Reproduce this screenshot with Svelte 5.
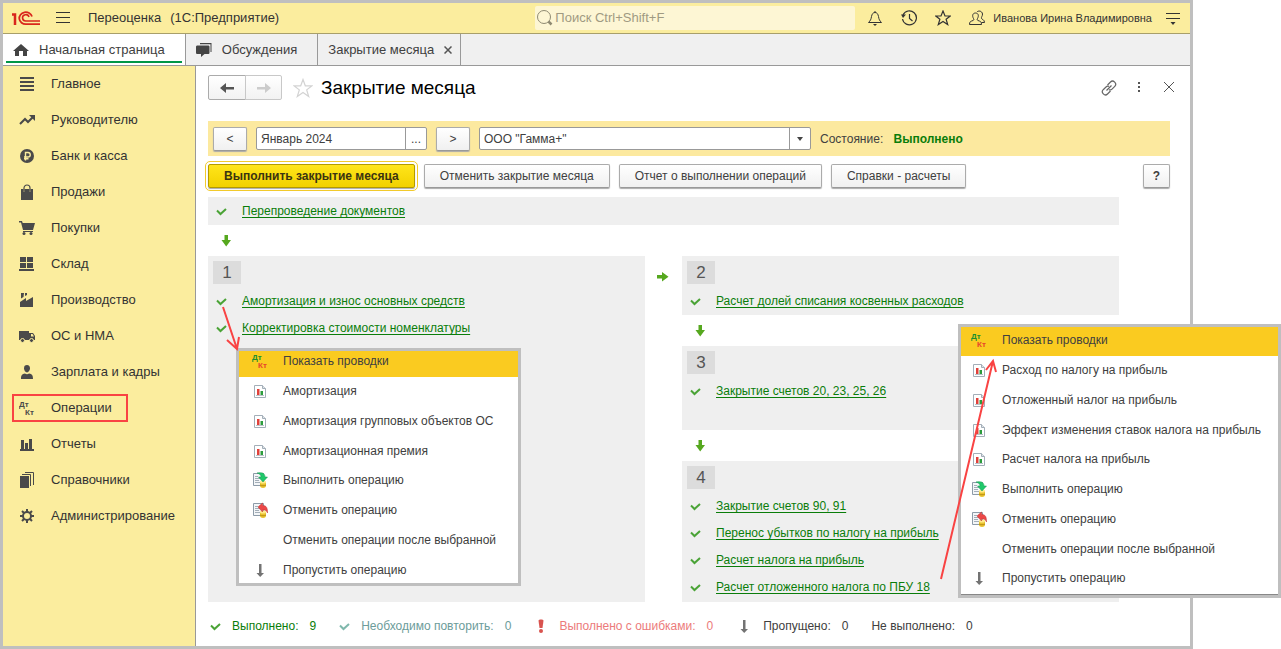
<script>
  const sections = [
    { icon: 'lines', title: 'Главное' },
    { icon: 'trend', title: 'Руководителю' },
    { icon: 'ruble', title: 'Банк и касса' },
    { icon: 'bag', title: 'Продажи' },
    { icon: 'cart', title: 'Покупки' },
    { icon: 'stock', title: 'Склад' },
    { icon: 'factory', title: 'Производство' },
    { icon: 'truck', title: 'ОС и НМА' },
    { icon: 'person', title: 'Зарплата и кадры' },
    { icon: 'dtkt', title: 'Операции' },
    { icon: 'bars', title: 'Отчеты' },
    { icon: 'books', title: 'Справочники' },
    { icon: 'gear', title: 'Администрирование' }
  ]
  let current = 'Операции'

  const steps = {
    1: ['Амортизация и износ основных средств', 'Корректировка стоимости номенклатуры'],
    2: ['Расчет долей списания косвенных расходов'],
    3: ['Закрытие счетов 20, 23, 25, 26'],
    4: ['Закрытие счетов 90, 91', 'Перенос убытков по налогу на прибыль', 'Расчет налога на прибыль', 'Расчет отложенного налога по ПБУ 18']
  }

  const common = [
    { icon: 'run', title: 'Выполнить операцию' },
    { icon: 'undo', title: 'Отменить операцию' },
    { icon: '', title: 'Отменить операции после выбранной' },
    { icon: 'skip', title: 'Пропустить операцию' }
  ]
  const assetsMenu = [
    { icon: 'dtktColor', title: 'Показать проводки' },
    { icon: 'report', title: 'Амортизация' },
    { icon: 'report', title: 'Амортизация групповых объектов ОС' },
    { icon: 'report', title: 'Амортизационная премия' },
    ...common
  ]
  const taxMenu = [
    { icon: 'dtktColor', title: 'Показать проводки' },
    { icon: 'report', title: 'Расход по налогу на прибыль' },
    { icon: 'report', title: 'Отложенный налог на прибыль' },
    { icon: 'report', title: 'Эффект изменения ставок налога на прибыль' },
    { icon: 'report', title: 'Расчет налога на прибыль' },
    ...common
  ]

  let search = ''
  let month = 'Январь 2024'
  let company = 'ООО "Гамма+"'
</script>

{#snippet icon(name)}
  <svg class="icon" width="16" height="16" viewBox="0 0 16 16" fill="currentColor" aria-hidden="true">
    {#if name === 'lines'}
      <path d="M1 1h14v2H1zM1 5h14v2H1zM1 9h14v2H1zM1 13h14v2H1z" />
    {:else if name === 'trend'}
      <path d="M1 12l5-5 3 3 5-5" fill="none" stroke="currentColor" stroke-width="2" />
      <path d="M10 3h6v6z" />
    {:else if name === 'ruble'}
      <circle cx="8" cy="8" r="7" />
      <path d="M6.500 12.500V4.500H9a2.200 2.200 0 0 1 0 4.500H5M5 10.800h4.500" fill="none" stroke="#fbed9e" stroke-width="1.400" />
    {:else if name === 'bag'}
      <path d="M2 5h2.500v2.500h1V5h5v2.500h1V5H14v11H2z" />
      <path d="M5 7V4a3 3 0 0 1 6 0v3" fill="none" stroke="currentColor" stroke-width="1.200" />
    {:else if name === 'cart'}
      <path d="M0 1h3l.7 2H16l-2 7H4L2 2.500H0z" />
      <path d="M4 11.500h10" stroke="currentColor" />
      <circle cx="5" cy="13.500" r="1.500" /><circle cx="12" cy="13.500" r="1.500" />
    {:else if name === 'stock'}
      <path d="M1 1h6v5H1zM8 1h6v5H8zM1 7h6v5H1zM8 7h6v5H8zM0 13h15v2H0z" />
    {:else if name === 'factory'}
      <path d="M1 15V10l6-4v3l7-4v10z" />
      <path d="M2 1h3l-.5 4L2 6.500zM6 1h2v2L6 4z" />
    {:else if name === 'truck'}
      <path d="M0 3h10v9H0z" />
      <path d="M10 5h4l2 3v4h-6zm2 1v2.500h3L13.500 6z" fill-rule="evenodd" />
      <circle cx="3.500" cy="12.500" r="2" stroke="#fbed9e" /><circle cx="12.500" cy="12.500" r="2" stroke="#fbed9e" />
    {:else if name === 'person'}
      <path d="M8 1c2 0 3 1.300 3 3.300S9.500 8.500 8 8.500 5 6.500 5 4.300 6 1 8 1z" />
      <path d="M2 15c0-4 1-5 4-5.500 1 1 3 1 4 0 3 .5 4 1.500 4 5.500z" />
    {:else if name === 'dtkt' || name === 'dtktColor'}
      <text x="0" y="7" class="glyph" class:green={name === 'dtktColor'}>Дт</text>
      <text x="6" y="15" class="glyph" class:red={name === 'dtktColor'}>Кт</text>
    {:else if name === 'bars'}
      <path d="M2 4h3v10H2zM6 7h3v7H6zM10 3h3v11h-3zM1 13h14v2H1z" />
    {:else if name === 'books'}
      <path d="M1 4h9v12H1z" />
      <path d="M3 2.500h8.500V14M6 .5h8.500V13" fill="none" stroke="currentColor" />
    {:else if name === 'gear'}
      <circle cx="8" cy="8" r="4" fill="none" stroke="currentColor" stroke-width="2" />
      <path d="M8 1v3M8 12v3M1 8h3M12 8h3M3 3l2 2M11 11l2 2M3 13l2-2M11 5l2-2" stroke="currentColor" stroke-width="2" />
    {:else if name === 'report'}
      <path d="M2.500 2.500h8l3 3v9h-11z" fill="#fff" stroke="#a3aeb8" />
      <path d="M10.500 2.500v3h3" fill="#dde3e8" stroke="#a3aeb8" />
      <path d="M5 6h2.500v6H5z" fill="#e0403a" /><path d="M8.500 8H11v4H8.500z" fill="#2c9c3c" />
      <path d="M4 12.500h8" stroke="#b9c2ca" />
    {:else if name === 'run' || name === 'undo'}
      <path d="M1.500 1.500h10v12h-10z" fill="#f4f6f8" stroke="#8d9ba8" />
      <path d="M3 4.500h3M3 6.500h5M3 8.500h4M3 10.500h5" stroke="#a3aeb8" />
      <path d="M8 10v4c0 2.500 6 2.500 6 0v-4z" fill="#e9c22e" />
      <ellipse cx="11" cy="10" rx="3" ry="1.500" fill="#ffe98a" />
      <path d="M8 13c1 1 5 1 6 0" fill="none" stroke="#b98e14" />
      {#if name === 'run'}
        <path d="M5 1c5-1 8 0 8 4h2.500L11 10 6.500 5H9c0-2-1-3-4-4z" fill="#1fc86a" stroke="#159650" stroke-width=".5" />
      {:else}
        <path d="M6 5l4.500-4v2.500c4 0 5 2 5 7.500-1-2.500-2-3-5-3V10z" fill="#ec4848" stroke="#b62e2e" stroke-width=".5" />
      {/if}
    {:else if name === 'skip'}
      <path d="M7 2h2.500v9H12l-3.800 4L4.500 11H7z" fill="#737373" />
    {/if}
  </svg>
{/snippet}

{#snippet check()}
  <svg class="check" width="11" height="11" viewBox="0 0 11 11" fill="none" stroke="currentColor" stroke-width="2" aria-hidden="true">
    <path d="M1 4.500l3.500 3.500L10 3" />
  </svg>
{/snippet}

{#snippet arrow(right)}
  <svg class="arrow" class:right width="12" height="12" viewBox="0 0 12 12" fill="#56a81f" aria-hidden="true">
    <path d="M4.500 0h3.500v5H11L6.200 11.500 1.500 5h3z" />
  </svg>
{/snippet}

{#snippet step(n)}
  <h2 class="number">{n}</h2>
  <ul class="operations">
    {#each steps[n] as title}
      <li>{@render check()}<a href="#operation">{title}</a></li>
    {/each}
  </ul>
{/snippet}

{#snippet menu(items)}
  <ul class="menu">
    {#each items as item}
      <li><button>{@render icon(item.icon)}{item.title}</button></li>
    {/each}
  </ul>
{/snippet}

<div class="window">
  <header class="topbar">
    <div class="brand">
      <svg width="30" height="16" viewBox="0 0 30 16" fill="none" stroke="#d9261c" aria-label="1С">
        <path d="M1 4.500h3V15" stroke-width="2.500" />
        <path d="M21 6.500A6.500 6 0 1 0 15 14.200H29" stroke-width="1.800" />
        <path d="M18 7A3.300 3.200 0 1 0 15 11H29" stroke-width="1.600" />
      </svg>
      <button class="plain burger" aria-label="Меню">
        <svg width="14" height="14" viewBox="0 0 14 14" stroke="#333"><path d="M0 1.500h14M0 6.500h14M0 11.500h14" /></svg>
      </button>
      <span class="app-title"><span>Переоценка</span> <span>(1С:Предприятие)</span></span>
    </div>
    <label class="search">
      <svg width="16" height="16" viewBox="0 0 16 16" fill="none" stroke="#8f8a72"><circle cx="7" cy="7" r="6.500" /><path d="M11.500 11.500l3 3" stroke-width="2.500" /></svg>
      <input type="text" placeholder="Поиск Ctrl+Shift+F" aria-label="Поиск" bind:value={search} />
    </label>
    <div class="tools">
      <button class="plain" aria-label="Уведомления">
        <svg width="16" height="16" viewBox="0 0 16 16" fill="none" stroke="#333"><path d="M1.500 12.500c2-2 2.500-3 3-6C5 4 6 2.500 8 2.500s3 1.500 3.500 4c.5 3 1 4 3 6zM8 1v1.500" /><path d="M6 14h4l-2 2z" fill="#333" stroke="none" /></svg>
      </button>
      <button class="plain" aria-label="История">
        <svg width="16" height="16" viewBox="0 0 16 16" fill="none" stroke="#333"><path d="M2 5a7 7 0 1 1-.5 4M8.500 4v4.500l3 2.500" stroke-width="1.200" /><path d="M0 4.500h5L2 8z" fill="#333" stroke="none" /></svg>
      </button>
      <button class="plain" aria-label="Избранное">
        <svg width="16" height="16" viewBox="0 0 16 16" fill="none" stroke="#333" stroke-width="1.200"><path d="M8 1l2 5h5.300l-4.200 3.300 1.600 5.200L8 11.400l-4.700 3.100 1.600-5.200L.7 6H6z" /></svg>
      </button>
      <button class="plain" aria-label="Пользователи">
        <svg width="16" height="16" viewBox="0 0 16 16" fill="none" stroke="#333"><path d="M.5 14.500c0-3 1-3 3.500-4 1-.5 1-1 .5-2C3 6 3.500 3 6.500 3s3.500 3 2 5.500c-.5 1-.5 1.500.5 2 2.500 1 3.500 1 3.500 4z" /><path d="M8 2c1-1.500 5-1.500 5.500 2 .2 2-1.500 3-1 4.500.5 1 3 1 3 4h-3" /></svg>
      </button>
      <span class="user">Иванова Ирина Владимировна</span>
      <button class="plain" aria-label="Сервис">
        <svg width="16" height="16" viewBox="0 0 16 16" stroke="#333"><path d="M1 3.500h14M1 8.500h14" /><path d="M5.500 12h5L8 15z" fill="#333" stroke="none" /></svg>
      </button>
    </div>
  </header>

  <nav class="tabs">
    <a href="#home" class="active">
      <svg width="16" height="14" viewBox="0 0 16 14" fill="#444"><path d="M8 1l8 7h-2v5h-4V8H6v5H2V8H0z" /></svg>
      Начальная страница
    </a>
    <a href="#talks">
      <svg width="16" height="16" viewBox="0 0 16 16" fill="#444"><path d="M4 1h11.500v9h-1V2.200H4z" /><path d="M12 3.500c1 0 1.500.5 1.500 1.500v5.500c0 1-.5 1.500-1.500 1.500H8.500L5 15v-3H1.500C.5 12 0 11.500 0 10.500V5c0-1 .5-1.500 1.500-1.500z" /></svg>
      Обсуждения
    </a>
    <a href="#closing" class="closing">Закрытие месяца <svg width="8" height="8" viewBox="0 0 8 8" stroke="#555" stroke-width="1.500"><path d="M0.500 0.500l7 7M7.500 0.500l-7 7" /></svg></a>
  </nav>

  <div class="body">
    <nav class="sections">
      {#each sections as section}
        <a href="#section" class:marked={section.title === current}>{@render icon(section.icon)}{section.title}</a>
      {/each}
    </nav>

    <main>
      <div class="heading">
        <div class="history">
          <button aria-label="Назад"><svg width="16" height="12" viewBox="0 0 16 12" fill="#555"><path d="M1 6l6-5v4h8v2.500H7V11z" /></svg></button>
          <button aria-label="Вперед" disabled><svg width="16" height="12" viewBox="0 0 16 12" fill="#ccc"><path d="M15 6L9 1v4H1v2.500h8V11z" /></svg></button>
        </div>
        <button class="plain" aria-label="В избранное">
          <svg width="20" height="20" viewBox="0 0 20 20" fill="none" stroke="#d3d3d3" stroke-width="1.200"><path d="M10 1.500l2.300 6.300H19l-5.300 4.100 2 6.600-5.700-4-5.700 4 2-6.600L1 7.800h6.700z" /></svg>
        </button>
        <h1>Закрытие месяца</h1>
        <div class="form-tools">
          <button class="plain" aria-label="Ссылка">
            <svg width="16" height="16" viewBox="0 0 16 16" fill="none" stroke="#666" stroke-width="1.200"><path d="M6.500 5l3-3c2.700-2.700 7 1.500 4.300 4.300l-2.800 2.800c-1 1-2 1-3 .6M9.500 11l-3 3c-2.700 2.700-7-1.500-4.300-4.300L5 7c1-1 2-1 3-.6M5.500 10.500l5-5" /></svg>
          </button>
          <button class="plain" aria-label="Еще">
            <svg width="16" height="16" viewBox="0 0 16 16" fill="#555"><path d="M7 2h2v2H7zM7 6h2v2H7zM7 10h2v2H7z" /></svg>
          </button>
          <button class="plain" aria-label="Закрыть">
            <svg width="16" height="16" viewBox="0 0 16 16" stroke="#555"><path d="M3 2l10 10M13 2L3 12" /></svg>
          </button>
        </div>
      </div>

      <div class="period">
        <button class="btn shift">&lt;</button>
        <div class="field month">
          <input type="text" aria-label="Период" bind:value={month} />
          <button aria-label="Выбрать период">...</button>
        </div>
        <button class="btn shift">&gt;</button>
        <div class="field company">
          <select aria-label="Организация" bind:value={company}>
            <option>ООО "Гамма+"</option>
          </select>
          <span class="caret"><svg width="6" height="4" viewBox="0 0 6 4" fill="#444"><path d="M0 0h6L3 4z" /></svg></span>
        </div>
        <span class="state">Состояние: <b>Выполнено</b></span>
      </div>

      <div class="commands">
        <button class="btn primary">Выполнить закрытие месяца</button>
        <button class="btn">Отменить закрытие месяца</button>
        <button class="btn">Отчет о выполнении операций</button>
        <button class="btn">Справки - расчеты</button>
        <button class="btn help">?</button>
      </div>

      <div class="flow">
        <div class="block repost">{@render check()}<a href="#operation">Перепроведение документов</a></div>
        <div class="down">{@render arrow(false)}</div>
        <div class="columns">
          <section class="block">
            {@render step(1)}
            <div class="popup assets">{@render menu(assetsMenu)}</div>
            <svg class="pointer assets-pointer" width="22" height="46" viewBox="0 0 22 46"><path d="M4 2l14 42M8 35l10 9 2-12" /></svg>
          </section>
          <div class="across">{@render arrow(true)}</div>
          <div class="column">
            <section class="block">{@render step(2)}</section>
            <div class="down">{@render arrow(false)}</div>
            <section class="block accounts">{@render step(3)}</section>
            <div class="down">{@render arrow(false)}</div>
            <section class="block results">
              {@render step(4)}
              <div class="popup tax">{@render menu(taxMenu)}</div>
              <svg class="pointer tax-pointer" width="64" height="226" viewBox="0 0 64 226"><path d="M4 222L56 4M49 13l7-9 3 11" /></svg>
            </section>
          </div>
        </div>
      </div>

      <footer class="totals">
        <span class="done">{@render check()}Выполнено: <span>9</span></span>
        <span class="repeat">{@render check()}Необходимо повторить: <span>0</span></span>
        <span class="failed"><svg width="14" height="14" viewBox="0 0 14 14" fill="#d9534f"><path d="M4.500 1.500C4.500 0 9.500 0 9.500 1.500L8.500 9h-3z" /><circle cx="7" cy="12" r="2" /></svg>Выполнено с ошибками: <span>0</span></span>
        <span class="skipped">{@render icon('skip')}Пропущено: <span>0</span></span>
        <span>Не выполнено: <span>0</span></span>
      </footer>
    </main>
  </div>
</div>

<style>
  :global(body) {
    background: #fff;
    overflow: hidden;
  }
  * {
    box-sizing: border-box;
  }
  .window {
    margin-right: 88px;
    border: 3px solid #bfbfbf;
    background: #fff;
    color: #404040;
    font: 12px/16px "Liberation Sans", Arial, sans-serif;
  }
  button, input, select {
    font: inherit;
    color: inherit;
  }
  svg {
    display: block;
    flex: none;
  }
  ul, h1, h2 {
    margin: 0;
    padding: 0;
    list-style: none;
    font-weight: normal;
  }
  .plain {
    padding: 0;
    border: none;
    background: none;
  }

  .topbar {
    display: grid;
    grid-template-columns: 1fr 320px auto;
    align-items: center;
    height: 31px;
    border-bottom: 1px solid #a89f6a;
    background: #fbed9e;
    font-size: 13px;
    color: #333;
  }
  .brand {
    display: flex;
    align-items: center;
    padding-left: 8px;
  }
  .burger {
    margin: 0 18px 0 15px;
  }
  .app-title {
    display: flex;
    gap: 9px;
  }
  .search {
    display: flex;
    align-items: center;
    gap: 2px;
    height: 24px;
    padding-left: 2px;
    border-radius: 2px;
    background: #fdf6d4;
  }
  .search input {
    flex: 1;
    min-width: 0;
    padding: 0;
    border: none;
    background: none;
    outline: none;
  }
  .search input::placeholder {
    color: #a09a82;
  }
  .tools {
    display: flex;
    align-items: center;
    gap: 18px;
    padding: 0 9px 0 12px;
  }
  .user {
    margin: 0 -5px 0 -10px;
    font-size: 11px;
  }

  .tabs {
    display: flex;
    height: 32px;
    border-bottom: 1px solid #999;
    background: #f0f0f0;
    font-size: 13px;
  }
  .tabs a {
    display: flex;
    align-items: center;
    gap: 10px;
    padding: 0 20px 0 10px;
    border-right: 1px solid #999;
    color: #404040;
    text-decoration: none;
  }
  .tabs .active {
    background: linear-gradient(#009646, #009646) 3px 27px / calc(100% - 6px) 2px no-repeat #fff;
  }
  .tabs .closing {
    padding-right: 8px;
  }

  .body {
    display: flex;
  }
  .sections {
    width: 193px;
    flex: none;
    padding-top: 4px;
    border-right: 1px solid #999;
    background: #fbed9e;
    font-size: 13px;
  }
  .sections a {
    display: flex;
    align-items: center;
    gap: 16px;
    width: fit-content;
    height: 28px;
    margin: 0 0 8px 9px;
    padding: 0 14px 0 5px;
    border: 2px solid transparent;
    color: #333;
    text-decoration: none;
  }
  .sections a.marked {
    border-color: #f94343;
  }
  .sections .icon {
    color: #4a4a4a;
  }
  .glyph {
    font: bold 8px "Liberation Sans", Arial, sans-serif;
  }
  .glyph.green {
    fill: #1c8f2e;
  }
  .glyph.red {
    fill: #e8452c;
  }

  main {
    flex: 1;
    min-width: 0;
    padding: 9px 20px 12px 12px;
  }
  .heading {
    display: flex;
    align-items: center;
    height: 25px;
  }
  .history {
    display: flex;
    margin-right: 11px;
  }
  .history button {
    display: flex;
    align-items: center;
    justify-content: center;
    width: 38px;
    height: 25px;
    border: 1px solid #ababab;
    border-radius: 2px 0 0 2px;
    background: linear-gradient(#fff, #f2f2f2);
  }
  .history button:disabled {
    width: 37px;
    margin-left: -1px;
    border-color: #c8c8c8;
    border-radius: 0 2px 2px 0;
  }
  h1 {
    margin-left: 8px;
    font-size: 19px;
    color: #000;
  }
  .form-tools {
    display: flex;
    gap: 14px;
    margin: 0 -7px 0 auto;
  }

  .btn {
    height: 24px;
    padding: 0 15px;
    border: 1px solid #ababab;
    border-bottom-color: #999;
    border-radius: 2px;
    background: linear-gradient(#fff, #f0f0f0);
    box-shadow: 0 1px 1px #aaa;
    white-space: nowrap;
  }
  .period {
    display: flex;
    align-items: center;
    height: 35px;
    margin-top: 21px;
    padding-left: 5px;
    background: #fce99f;
  }
  .shift {
    width: 34px;
    padding: 0;
  }
  .field {
    display: flex;
    height: 23px;
    margin: 0 9px;
    border: 1px solid #999;
    border-radius: 2px;
    background: #fff;
  }
  .field input, .field select {
    flex: 1;
    min-width: 0;
    padding: 0 4px;
    border: none;
    background: none;
    outline: none;
    appearance: none;
  }
  .field button, .caret {
    display: flex;
    align-items: center;
    justify-content: center;
    width: 21px;
    padding: 0;
    border: none;
    border-left: 1px solid #999;
    background: none;
  }
  .caret {
    pointer-events: none;
  }
  .month {
    width: 171px;
  }
  .company {
    width: 332px;
  }
  .state b {
    margin-left: 7px;
    color: #0a7d0a;
  }

  .commands {
    display: flex;
    gap: 9px;
    margin-top: 8px;
  }
  .primary {
    border-color: #b39a00;
    background: linear-gradient(#ffe51a, #f2d100);
    outline: 1px solid #f2ca2c;
    outline-offset: 2px;
    font-weight: bold;
    color: #3b3410;
  }
  .help {
    width: 27px;
    margin-left: auto;
    padding: 0;
    font-weight: bold;
  }

  .flow {
    margin: 9px 51px 0 0;
  }
  .flow a {
    color: #0a7d0a;
    text-underline-offset: 2px;
  }
  .block {
    position: relative;
    background: #efefef;
  }
  .check {
    color: #4aa336;
  }
  .repost {
    display: flex;
    align-items: center;
    gap: 15px;
    height: 28px;
    padding-left: 8px;
  }
  .columns {
    display: grid;
    grid-template-columns: 1fr 37px 1fr;
  }
  .down {
    display: flex;
    align-items: center;
    height: 31px;
    padding-left: 12px;
  }
  .across {
    padding: 15px 0 0 12px;
  }
  .right {
    transform: rotate(-90deg);
  }
  .number {
    width: 33px;
    height: 28px;
    padding: 5px 0 0 5px;
    background: linear-gradient(#dcdcdc, #dcdcdc) 5px 5px / 28px 23px no-repeat;
    font-size: 17px;
    line-height: 23px;
    text-align: center;
    color: #555;
  }
  .operations {
    display: grid;
    gap: 11px;
    padding: 9px 0 6px 8px;
  }
  .operations li {
    display: flex;
    align-items: center;
    gap: 15px;
  }
  .accounts {
    height: 84px;
  }
  .results {
    padding-bottom: 1px;
  }

  .popup {
    position: absolute;
    z-index: 1;
    border: 3px solid #bfbfbf;
    background: #fff;
  }
  .assets {
    left: 28px;
    top: 92px;
    width: 285px;
  }
  .tax {
    left: 276px;
    top: -137px;
    width: 323px;
  }
  .menu button {
    display: flex;
    align-items: center;
    gap: 15px;
    width: 100%;
    height: 30px;
    padding: 4px 0 6px 13px;
    border: none;
    background: none;
    text-align: left;
    white-space: nowrap;
  }
  .menu li:nth-child(4n) button {
    height: 29px;
    padding-bottom: 5px;
  }
  .assets li:first-child button {
    height: 26px;
    padding-top: 0;
    background: #facb20;
  }
  .assets li:last-child button {
    height: 27px;
    padding-bottom: 3px;
  }
  .tax .menu {
    border-bottom: 1px solid #888;
  }
  .tax button {
    padding-left: 10px;
  }
  .tax li:first-child button {
    height: 29px;
    padding-top: 3px;
    background: #facb20;
  }
  .pointer {
    position: absolute;
    z-index: 2;
    fill: none;
    stroke: #f94343;
    stroke-width: 2;
    pointer-events: none;
  }
  .assets-pointer {
    left: 11px;
    top: 49px;
  }
  .tax-pointer {
    left: 255px;
    top: -104px;
  }

  .totals {
    display: flex;
    gap: 23px;
    margin-top: 16px;
    padding-left: 2px;
    white-space: nowrap;
  }
  .totals > span {
    display: flex;
    align-items: center;
    gap: 11px;
  }
  .done {
    color: #0a7d0a;
  }
  .repeat {
    color: #6c9c9a;
  }
  .repeat .check {
    color: #7fb8ac;
  }
  .failed {
    color: #ec7b7b;
  }
</style>
